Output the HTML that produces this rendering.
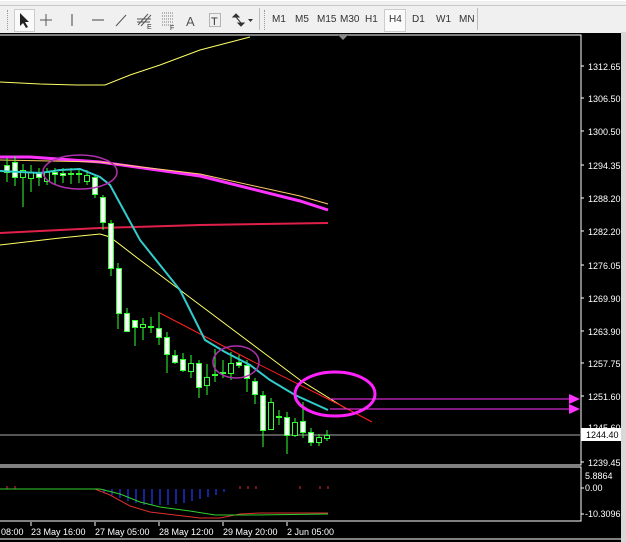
<!DOCTYPE html>
<html><head><meta charset="utf-8"><style>
body{margin:0;width:626px;height:542px;overflow:hidden;background:#000;font-family:"Liberation Sans",sans-serif}
#tb{position:absolute;left:0;top:0;width:626px;height:32px;background:#f0f0f0;border-top:1px solid #fff}
#tb .ln{position:absolute;left:0;top:4px;width:626px;height:1px;background:#c8c8c8}
.t{position:absolute;top:13px;font-size:10px;color:#333;font-family:"Liberation Sans",sans-serif}
</style></head><body>
<div id="tb"><div class="ln"></div>
<div style="position:absolute;left:14px;top:8px;width:19px;height:21px;background:#fafafa;border:1px solid #ccc"></div>
<div style="position:absolute;left:384px;top:8px;width:20px;height:21px;background:#fafafa;border:1px solid #ccc"></div>
<div style="position:absolute;left:7px;top:9px;width:2px;height:20px;border-left:1px dotted #999"></div>
<div style="position:absolute;left:259px;top:7px;width:1px;height:22px;background:#bbb"></div>
<div style="position:absolute;left:264px;top:9px;width:2px;height:20px;border-left:1px dotted #999"></div>
<div style="position:absolute;left:477px;top:7px;width:1px;height:22px;background:#bbb"></div>
<svg style="position:absolute;left:0;top:0" width="260" height="32">
<path d="M20 12 L20 25 L23 22 L26 27 L28 26 L25 21 L29 21 Z" fill="#222"/>
<path d="M46 13V25M40 19H52" stroke="#555"/>
<path d="M72 13V25" stroke="#444"/>
<path d="M92 19H104" stroke="#444"/>
<path d="M116 25L126 14" stroke="#555"/>
<path d="M138 24L148 13M141 25L151 14M137 18H151M137 21H150" stroke="#555"/>
<text x="147" y="28" font-size="7" fill="#333" font-family="Liberation Sans">E</text>
<path d="M162 12H174M162 15H174M162 18H174M162 21H174M162 24H174" stroke="#777" stroke-dasharray="1,1"/>
<text x="170" y="29" font-size="7" fill="#333" font-family="Liberation Sans">F</text>
<text x="186" y="25" font-size="13" fill="#555" font-family="Liberation Sans">A</text>
<rect x="209.5" y="12.5" width="11" height="13" fill="none" stroke="#777" stroke-dasharray="1,1"/>
<text x="211" y="24" font-size="11" fill="#333" font-family="Liberation Sans">T</text>
<path d="M233 16l3-3 3 3zM236 16l5 6M238 22l3 3 3-3z" fill="#333" stroke="#333"/>
<path d="M248 18h5l-2.5 3z" fill="#333"/>
</svg>
<span class="t" style="left:272px">M1</span><span class="t" style="left:295px">M5</span>
<span class="t" style="left:317px">M15</span><span class="t" style="left:340px">M30</span>
<span class="t" style="left:365px">H1</span><span class="t" style="left:389px">H4</span>
<span class="t" style="left:412px">D1</span><span class="t" style="left:436px">W1</span>
<span class="t" style="left:459px">MN</span>
</div>
<svg style="position:absolute;left:0;top:32px" width="626" height="510" viewBox="0 32 626 510">
<rect x="-1" y="35" width="582" height="430" fill="none" stroke="#fff"/>
<rect x="-1" y="467" width="582" height="54" fill="none" stroke="#fff"/>
<path d="M0 539H626" stroke="#fff"/>
<rect x="621" y="32" width="5" height="510" fill="#d8d8d8"/>
<path d="M338 35l5 5 5-5z" fill="#888"/>
<polyline fill="none" stroke="#ffff66" points="0,82 40,84 76,85 105,85 130,75 160,65 200,50 250,37"/>
<polyline fill="none" stroke="#ff33ff" stroke-width="3" points="0,157 30,157 100,162 200,176 300,201 328,210"/>
<polyline fill="none" stroke="#ffcc66" points="0,160 100,162 200,174 300,196 328,204"/>
<polyline fill="none" stroke="#e0204a" stroke-width="2" points="0,233 100,228 200,225 328,223"/>
<polyline fill="none" stroke="#ffff66" points="0,245 60,238 100,234 110,237 140,260 200,305 260,350 300,380 345,408"/>
<polyline fill="none" stroke="#ff2020" points="160,313 250,360 340,405 372,422"/>
<path d="M0 435H580" stroke="#aaa"/>
<g stroke="#33ff33" stroke-width="1">
<path d="M7 158V182M15 156V186M23 164V207M31 165V192M39 168V186M47 168V185M55 168V185M63 168V183M71 168V184M79 168V183M87 170V185M95 175V198M103 195V230M111 220V276M118 263V329M127 308V332M135 320V346M143 318V340M151 317V333M159 312V345M167 332V373M175 350V364M183 353V372M191 355V378M199 360V398M207 364V395M215 349V382M223 360V378M231 352V380M239 355V368M247 360V392M255 378V404M263 391V447M271 398V430M279 410V425M287 412V454M295 418V437M303 402V438M311 428V446M319 434V446M327 430V441"/>
</g>
<g stroke="#33ff33" fill="#fff">
<rect x="4.5" y="165.5" width="5" height="7"/><rect x="12.5" y="162.5" width="5" height="15"/>
<rect x="20.5" y="170.5" width="5" height="7" fill="#000"/><rect x="28.5" y="172.5" width="5" height="6" fill="#000"/>
<rect x="36.5" y="173.5" width="5" height="4"/><rect x="44.5" y="172.5" width="5" height="9" fill="#000"/>
<rect x="52.5" y="172.5" width="5" height="2"/><rect x="60.5" y="173.5" width="5" height="2"/>
<rect x="68.5" y="173.5" width="5" height="1"/><rect x="76.5" y="173.5" width="5" height="1"/>
<rect x="84.5" y="175.5" width="5" height="6" fill="#000"/><rect x="92.5" y="177.5" width="5" height="17"/>
<rect x="100.5" y="197.5" width="5" height="25"/><rect x="108.5" y="223.5" width="5" height="45"/>
<rect x="116.5" y="268.5" width="5" height="45"/><rect x="124.5" y="313.5" width="5" height="18"/>
<rect x="132.5" y="320.5" width="5" height="7"/><rect x="140.5" y="324.5" width="5" height="3" fill="#000"/>
<rect x="148.5" y="326.5" width="5" height="1"/><rect x="156.5" y="328.5" width="5" height="9"/>
<rect x="164.5" y="337.5" width="5" height="17"/><rect x="172.5" y="355.5" width="5" height="7"/>
<rect x="180.5" y="359.5" width="5" height="11"/><rect x="188.5" y="363.5" width="5" height="8" fill="#000"/>
<rect x="196.5" y="363.5" width="5" height="24"/><rect x="204.5" y="377.5" width="5" height="8" fill="#000"/>
<rect x="212.5" y="374.5" width="5" height="1"/><rect x="220.5" y="372.5" width="5" height="1"/>
<rect x="228.5" y="363.5" width="5" height="10" fill="#000"/><rect x="236.5" y="362.5" width="5" height="3"/>
<rect x="244.5" y="365.5" width="5" height="13"/><rect x="252.5" y="381.5" width="5" height="13"/>
<rect x="260.5" y="395.5" width="5" height="35"/><rect x="268.5" y="402.5" width="5" height="27" fill="#000"/>
<rect x="276.5" y="416.5" width="5" height="1"/><rect x="284.5" y="417.5" width="5" height="18"/>
<rect x="292.5" y="422.5" width="5" height="13" fill="#000"/><rect x="300.5" y="421.5" width="5" height="11"/>
<rect x="308.5" y="432.5" width="5" height="10"/><rect x="316.5" y="437.5" width="5" height="5" fill="#000"/>
<rect x="324.5" y="435.5" width="5" height="3" fill="#000"/>
</g>
<polyline fill="none" stroke="#33cccc" stroke-width="2" points="0,171 40,173 60,170 80,169 100,177 110,185 140,240 180,290 205,340 225,352 250,365 270,380 295,395 328,410"/>
<ellipse cx="80" cy="172" rx="37" ry="17" fill="none" stroke="#b030b0" stroke-width="1.5"/>
<ellipse cx="236" cy="362" rx="23" ry="16" fill="none" stroke="#b030b0" stroke-width="1.5"/>
<ellipse cx="335" cy="394" rx="40" ry="22" fill="none" stroke="#ff22ff" stroke-width="3"/>
<path d="M330 399H570M330 409H570" stroke="#ff33ff"/>
<path d="M569 394l11 5-11 5zM569 404l11 5-11 5z" fill="#ff33ff"/>
<g fill="#fff" font-size="9" font-family="Liberation Sans">
<text x="588" y="70">1312.65</text><text x="588" y="102">1306.50</text><text x="588" y="135">1300.50</text>
<text x="588" y="169">1294.35</text><text x="588" y="202">1288.20</text><text x="588" y="235">1282.20</text>
<text x="588" y="269">1276.05</text><text x="588" y="302">1269.90</text><text x="588" y="335">1263.90</text>
<text x="588" y="367">1257.75</text><text x="588" y="400">1251.60</text><text x="588" y="431">1245.60</text>
<text x="588" y="466">1239.45</text>
<text x="585" y="479">5.8864</text><text x="585" y="491">0.00</text><text x="585" y="517">-10.3096</text>
</g>
<g stroke="#fff"><path d="M581 66h3M581 98h3M581 131h3M581 165h3M581 198h3M581 231h3M581 265h3M581 298h3M581 331h3M581 363h3M581 396h3M581 462h3M581 488h3M581 514h3"/></g>
<rect x="581" y="428" width="40" height="13" fill="#fff"/>
<text x="586" y="438" font-size="9" fill="#000" font-family="Liberation Sans">1244.40</text>
<g stroke="#2233ee" stroke-width="1.3">
<path d="M104 489v4M112 489v6M120 489v9M128 489v12M136 489v14M144 489v16M152 489v16M160 489v16M168 489v16M176 489v15M184 489v14M192 489v12M200 489v10M208 489v8M216 489v6M224 489v3"/>
</g>
<path d="M7 486v3M15 486v3M240 486v3M248 486v3M256 486v3M300 486v3M320 486v3M328 486v3" stroke="#e03030"/>
<polyline fill="none" stroke="#e03030" points="0,489 95,489 110,495 130,506 150,512 175,515 200,518 220,518 240,514 260,513 328,513"/>
<polyline fill="none" stroke="#30d030" points="0,489 100,489 120,494 140,502 160,507 190,511 215,515 250,515 328,514"/>
<g fill="#fff" font-size="9" font-family="Liberation Sans">
<text x="1" y="535">08:00</text><text x="31" y="535">23 May 16:00</text><text x="95" y="535">27 May 05:00</text>
<text x="159" y="535">28 May 12:00</text><text x="223" y="535">29 May 20:00</text><text x="287" y="535">2 Jun 05:00</text>
</g>
<path d="M31 522v4M95 522v4M159 522v4M223 522v4M287 522v4" stroke="#fff"/>
</svg>
</body></html>
